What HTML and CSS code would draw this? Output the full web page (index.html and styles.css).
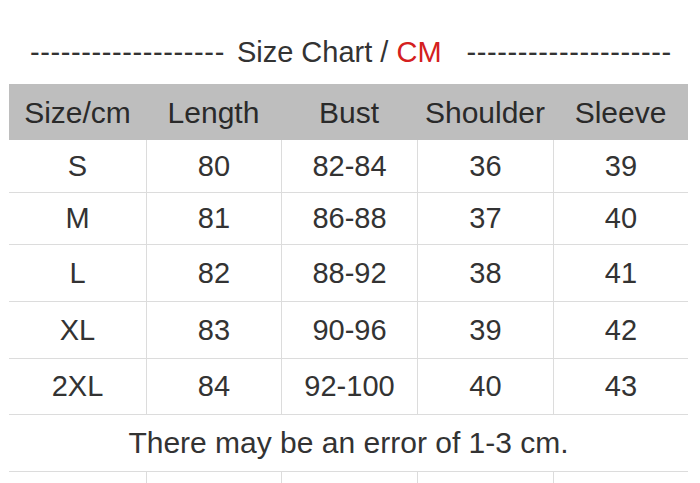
FILE: index.html
```html
<!DOCTYPE html>
<html>
<head>
<meta charset="utf-8">
<link rel="stylesheet" href="styles.css">
</head>
<body>
<div class="page">
  <div class="title">
    <span class="dashes">-------------------</span>
    <span class="label">Size Chart / <span class="unit">CM</span></span>
    <span class="dashes right">--------------------</span>
  </div>
  <div class="chart">
    <div class="row head">
      <div class="cell">Size/cm</div>
      <div class="cell">Length</div>
      <div class="cell">Bust</div>
      <div class="cell">Shoulder</div>
      <div class="cell">Sleeve</div>
    </div>
    <div class="row r1">
      <div class="cell">S</div><div class="cell">80</div><div class="cell">82-84</div><div class="cell">36</div><div class="cell">39</div>
    </div>
    <div class="row r2">
      <div class="cell">M</div><div class="cell">81</div><div class="cell">86-88</div><div class="cell">37</div><div class="cell">40</div>
    </div>
    <div class="row r3">
      <div class="cell">L</div><div class="cell">82</div><div class="cell">88-92</div><div class="cell">38</div><div class="cell">41</div>
    </div>
    <div class="row r4">
      <div class="cell">XL</div><div class="cell">83</div><div class="cell">90-96</div><div class="cell">39</div><div class="cell">42</div>
    </div>
    <div class="row r5">
      <div class="cell">2XL</div><div class="cell">84</div><div class="cell">92-100</div><div class="cell">40</div><div class="cell">43</div>
    </div>
    <div class="note">There may be an error of 1-3 cm.</div>
    <div class="row tail">
      <div class="cell"></div><div class="cell"></div><div class="cell"></div><div class="cell"></div><div class="cell"></div>
    </div>
  </div>
</div>
</body>
</html>
```
FILE: styles.css
```css
html, body {
  margin: 0;
  padding: 0;
  background: #ffffff;
}
body {
  font-family: "Liberation Sans", Arial, sans-serif;
  color: #333333;
  overflow: hidden;
}
.page {
  width: 700px;
  height: 483px;
  overflow: hidden;
}
.title {
  display: flex;
  align-items: center;
  padding-top: 36px;
  padding-left: 30px;
  height: 32px;
  font-size: 29px;
  line-height: 32px;
  white-space: nowrap;
}
.dashes {
  letter-spacing: 0.6px;
}
.label {
  margin-left: 12px;
}
.unit {
  color: #d42020;
}
.right {
  margin-left: 25px;
}
.chart {
  margin: 16px 0 0 9px;
  width: 679px;
}
.row {
  display: grid;
  grid-template-columns: 137px 135px 136px 136px 135px;
  border-bottom: 1px solid #dcdcdc;
  box-sizing: border-box;
}
.cell {
  display: flex;
  align-items: center;
  justify-content: center;
  font-size: 29px;
  border-left: 1px solid #dcdcdc;
}
.cell:first-child {
  border-left: none;
}
.head {
  background: #bebebe;
  height: 56px;
  border-bottom: none;
  color: #2a2a2a;
}
.head .cell {
  font-size: 30px;
  border-left: none;
  padding-top: 2px;
}
.r1 { height: 53px; }
.r2 { height: 52px; }
.r3 { height: 57px; }
.r4 { height: 57px; }
.r5 { height: 56px; }
.note {
  height: 57px;
  box-sizing: border-box;
  border-bottom: 1px solid #dcdcdc;
  display: flex;
  align-items: center;
  justify-content: center;
  font-size: 30px;
}
.tail {
  height: 40px;
  border-bottom: none;
}
```
